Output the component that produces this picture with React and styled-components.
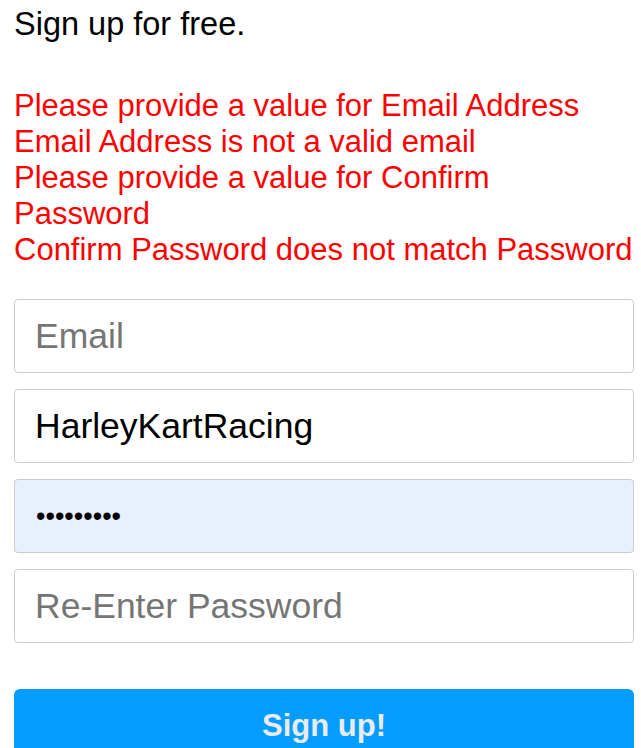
import React from "react";
import styled, { createGlobalStyle } from "styled-components";

const Global = createGlobalStyle`
  html, body { margin: 0; padding: 0; background: #fff; }
  body { font-family: "Liberation Sans", Arial, sans-serif; }
  * { box-sizing: border-box; }
`;

const Page = styled.div`
  padding: 6px 7px 0 14px;
  display: flex;
  flex-direction: column;
`;

const Heading = styled.div`
  font-size: 32.5px;
  line-height: 36px;
  color: #000;
`;

const Errors = styled.ul`
  list-style: none;
  margin: 46px 0 0;
  padding: 0;
  max-width: 619px;
  color: #ff0000;
  font-size: 31px;
  line-height: 36px;
`;

const ErrorItem = styled.li`
  margin: 0;
`;

const Form = styled.form`
  margin-top: 31px;
  display: flex;
  flex-direction: column;
  gap: 16px;
`;

const Field = styled.input`
  display: block;
  width: 620px;
  height: 74px;
  padding: 0 20px;
  border: 1px solid #cccccc;
  border-radius: 4px;
  font-family: "Liberation Sans", Arial, sans-serif;
  font-size: 35.5px;
  color: #000;
  background: #ffffff;
  outline: none;
  &::placeholder { color: #757575; opacity: 1; font-size: 35.5px; }
`;

const SecretField = styled(Field)`
  background: #e8f0fe;
  font-size: 27px;
  padding-left: 21px;
`;

const Submit = styled.button`
  margin-top: 30px;
  width: 620px;
  height: 74px;
  border: none;
  border-radius: 6px;
  background: #039dff;
  color: #ebebeb;
  font-family: "Liberation Sans", Arial, sans-serif;
  font-size: 31px;
  font-weight: bold;
  cursor: pointer;
`;

const errors = [
  "Please provide a value for Email Address",
  "Email Address is not a valid email",
  "Please provide a value for Confirm Password",
  "Confirm Password does not match Password",
];

export default function App() {
  return (
    <>
      <Global />
      <Page>
        <Heading>Sign up for free.</Heading>
        <Errors>
          {errors.map((e) => (
            <ErrorItem key={e}>{e}</ErrorItem>
          ))}
        </Errors>
        <Form onSubmit={(e) => e.preventDefault()}>
          <Field type="email" placeholder="Email" />
          <Field type="text" defaultValue="HarleyKartRacing" />
          <SecretField type="password" defaultValue="123456789" />
          <Field type="password" placeholder="Re-Enter Password" />
          <Submit type="submit">Sign up!</Submit>
        </Form>
      </Page>
    </>
  );
}
